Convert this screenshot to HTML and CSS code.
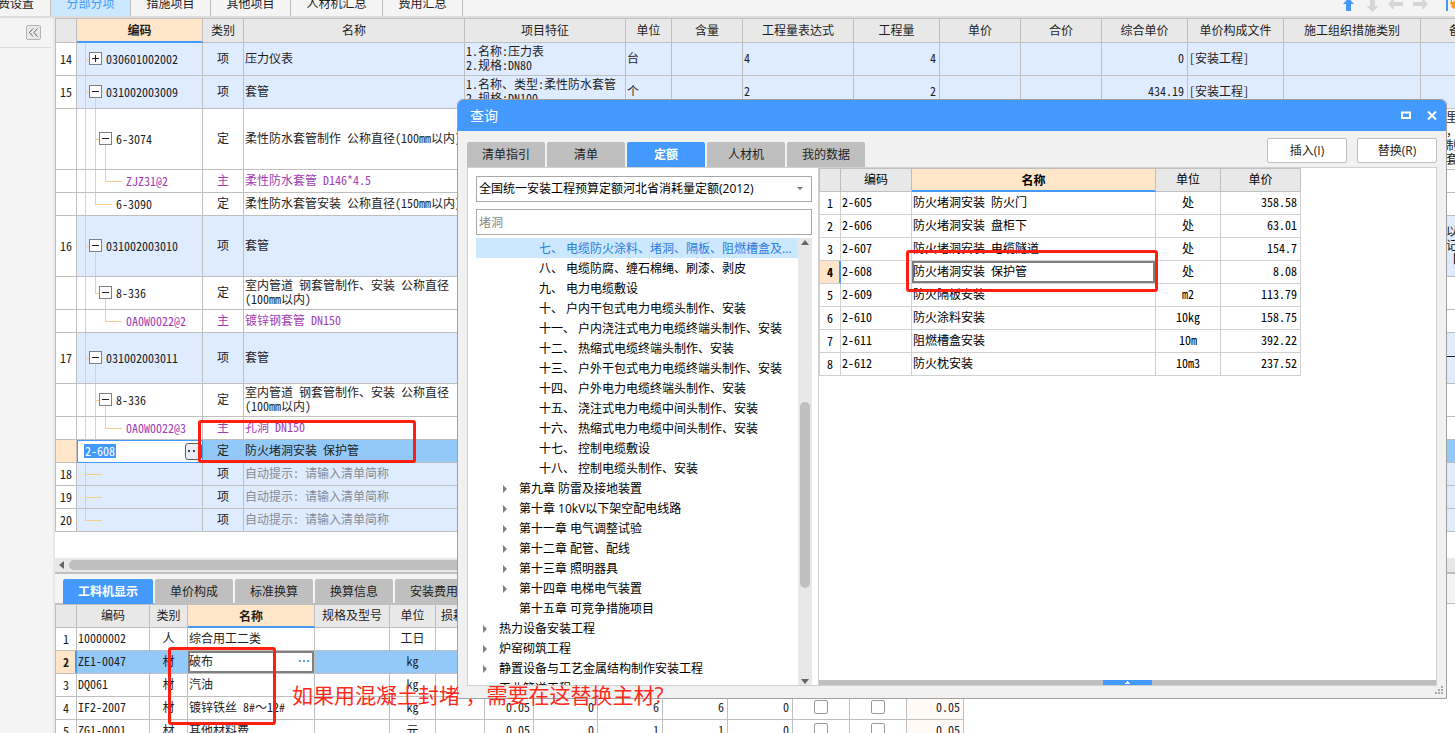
FILE: index.html
```html
<!DOCTYPE html>
<html lang="zh-CN">
<head>
<meta charset="utf-8">
<title>分部分项</title>
<link rel="stylesheet" href="styles.css">
</head>
<body>
<div class="app">
  <header class="topbar">
    <nav class="maintabs">
      <button class="first">费设置</button>
      <button class="w80 on">分部分项</button>
      <button class="w80">措施项目</button>
      <button class="w80">其他项目</button>
      <button class="w92">人材机汇总</button>
      <button class="w80">费用汇总</button>
    </nav>
    <div class="tools">
      <svg width="112" height="12" viewBox="0 0 112 12">
        <path d="M5.500 -2L11 4H8V11H3V4H0Z" fill="#4499ff"/>
        <path d="M27 0H32V6H35.500L29.500 12L23.500 6H27Z" fill="#d6d6d6"/>
        <path d="M45 4L51 -2V2H60V6H51V10Z" fill="#d6d6d6"/>
        <path d="M85 4L79 -2V2H70V6H79V10Z" fill="#d6d6d6"/>
        <path d="M103 0H105V11H103Z" fill="#4499ff"/>
        <path d="M108 0H109V2L112 1V9L110 8L108 7L109 5L107 4Z" fill="#ff9a1f"/>
      </svg>
    </div>
  </header>

  <div class="body">
    <aside class="side">
      <div class="sidehead">
        <button class="collapse" aria-label="收起"><svg width="9" height="9" viewBox="0 0 9 9"><path d="M4 0.500L0.500 4.500L4 8.500M8.500 0.500L5 4.500L8.500 8.500" fill="none" stroke="#666"/></svg></button>
      </div>
    </aside>

    <main class="main">
      <section class="upper">
        <div class="gridwrap">
        <table class="grid items">
          <colgroup><col class="c22"><col class="c126"><col class="c41"><col class="c221"><col class="c161"><col class="c46"><col class="c71"><col class="c111"><col class="c86"><col class="c81"><col class="c81"><col class="c86"><col class="c96"><col class="c137"><col class="c81"></colgroup>
          <thead><tr><th></th><th class="hot">编码</th><th>类别</th><th>名称</th><th>项目特征</th><th>单位</th><th>含量</th><th>工程量表达式</th><th>工程量</th><th>单价</th><th>合价</th><th>综合单价</th><th>单价构成文件</th><th>施工组织措施类别</th><th>备注</th></tr></thead>
          <tbody>
          <tr class="item h33"><td>14</td><td class="t-leaf"><div class="code in1"><button class="exp plus" aria-label="展开"></button>030601002002</div></td><td>项</td><td>压力仪表</td><td class="multi">1.名称:压力表<br>2.规格:DN80</td><td>台</td><td></td><td>4</td><td class="num">4</td><td></td><td></td><td class="num">0</td><td>[安装工程]</td><td></td><td></td></tr>
          <tr class="item h33"><td>15</td><td class="t-open"><div class="code in1"><button class="exp" aria-label="收起"></button>031002003009</div></td><td>项</td><td>套管</td><td class="multi">1.名称、类型:柔性防水套管<br>2.规格:DN100</td><td>个</td><td></td><td>2</td><td class="num">2</td><td></td><td></td><td class="num">434.19</td><td>[安装工程]</td><td></td><td></td></tr>
          <tr class="h61"><td></td><td class="t-sub-mid"><div class="code in2"><button class="exp" aria-label="收起"></button>6-3074</div></td><td>定</td><td>柔性防水套管制作 公称直径(100mm以内)</td><td></td><td></td><td></td><td></td><td></td><td></td><td></td><td></td><td></td><td></td><td class="multi note">里<br>，<br>制<br>套</td></tr>
          <tr class="mat h23"><td></td><td class="t-mat-mid"><div class="code in4">ZJZ31@2</div></td><td>主</td><td>柔性防水套管 D146*4.5</td><td></td><td></td><td></td><td></td><td></td><td></td><td></td><td></td><td></td><td></td><td></td></tr>
          <tr class="h23"><td></td><td class="t-sub-leaf"><div class="code in3">6-3090</div></td><td>定</td><td>柔性防水套管安装 公称直径(150mm以内)</td><td></td><td></td><td></td><td></td><td></td><td></td><td></td><td></td><td></td><td></td><td></td></tr>
          <tr class="item h61"><td>16</td><td class="t-open"><div class="code in1"><button class="exp" aria-label="收起"></button>031002003010</div></td><td>项</td><td>套管</td><td></td><td></td><td></td><td></td><td></td><td></td><td></td><td></td><td></td><td></td><td class="multi note">以<br>记<br>【</td></tr>
          <tr class="h33"><td></td><td class="t-sub-end"><div class="code in2"><button class="exp" aria-label="收起"></button>8-336</div></td><td>定</td><td class="multi">室内管道 钢套管制作、安装 公称直径<br>(100mm以内)</td><td></td><td></td><td></td><td></td><td></td><td></td><td></td><td></td><td></td><td></td><td></td></tr>
          <tr class="mat h23"><td></td><td class="t-mat-end"><div class="code in4">0A0W0022@2</div></td><td>主</td><td>镀锌钢套管 DN150</td><td></td><td></td><td></td><td></td><td></td><td></td><td></td><td></td><td></td><td></td><td></td></tr>
          <tr class="item h51"><td>17</td><td class="t-open"><div class="code in1"><button class="exp" aria-label="收起"></button>031002003011</div></td><td>项</td><td>套管</td><td></td><td></td><td></td><td></td><td></td><td></td><td></td><td></td><td></td><td></td><td class="note">一套</td></tr>
          <tr class="h33"><td></td><td class="t-sub-mid"><div class="code in2"><button class="exp" aria-label="收起"></button>8-336</div></td><td>定</td><td class="multi">室内管道 钢套管制作、安装 公称直径<br>(100mm以内)</td><td></td><td></td><td></td><td></td><td></td><td></td><td></td><td></td><td></td><td></td><td></td></tr>
          <tr class="mat h23"><td></td><td class="t-mat-mid"><div class="code in4">0A0W0022@3</div></td><td>主</td><td>孔洞 DN150</td><td></td><td></td><td></td><td></td><td></td><td></td><td></td><td></td><td></td><td></td><td></td></tr>
          <tr class="cur h23"><td></td><td class="editing"><div class="edit"><input class="editbox" value="2-608" aria-label="编码"><button class="more" aria-label="选择"><svg width="12" height="2" viewBox="0 0 12 2"><path d="M0 0H2V2H0ZM5 0H7V2H5ZM10 0H12V2H10Z" fill="#444"/></svg></button></div></td><td>定</td><td>防火堵洞安装 保护管</td><td></td><td></td><td></td><td></td><td></td><td></td><td></td><td></td><td></td><td></td><td></td></tr>
          <tr class="item hint h23"><td>18</td><td class="t-new"></td><td>项</td><td>自动提示: 请输入清单简称</td><td></td><td></td><td></td><td></td><td></td><td></td><td></td><td></td><td></td><td></td><td></td></tr>
          <tr class="item hint h23"><td>19</td><td class="t-new"></td><td>项</td><td>自动提示: 请输入清单简称</td><td></td><td></td><td></td><td></td><td></td><td></td><td></td><td></td><td></td><td></td><td></td></tr>
          <tr class="item hint h23"><td>20</td><td class="t-new-end"></td><td>项</td><td>自动提示: 请输入清单简称</td><td></td><td></td><td></td><td></td><td></td><td></td><td></td><td></td><td></td><td></td><td></td></tr>
          </tbody>
        </table>
        </div>
        <div class="hscroll"><svg width="5" height="8" viewBox="0 0 5 8"><path d="M5 0V8L0 4Z" fill="#666"/></svg><span class="hthumb"></span></div>
      </section>

      <section class="lower">
        <nav class="tabs lowtabs">
          <button class="on">工料机显示</button><button>单价构成</button><button>标准换算</button><button>换算信息</button><button>安装费用</button>
        </nav>
        <table class="grid parts">
          <colgroup><col class="c22"><col class="c73"><col class="c38"><col class="c127"><col class="c75"><col class="c46"><col class="c49"><col class="c49"><col class="c64"><col class="c65"><col class="c65"><col class="c65"><col class="c57"><col class="c57"><col class="c57"></colgroup>
          <thead><tr><th></th><th>编码</th><th>类别</th><th class="hot">名称</th><th>规格及型号</th><th>单位</th><th class="cut">损耗率</th><th></th><th></th><th></th><th></th><th></th><th></th><th></th><th></th></tr></thead>
          <tbody>
          <tr class="h23"><td>1</td><td>10000002</td><td>人</td><td>综合用工二类</td><td></td><td class="mid">工日</td><td></td><td></td><td></td><td></td><td></td><td></td><td></td><td></td><td></td></tr>
          <tr class="cur h23"><td>2</td><td>ZE1-0047</td><td>材</td><td class="cell"><div class="cellrow"><span>破布</span><svg width="11" height="2" viewBox="0 0 11 2"><path d="M0 0H2V2H0ZM4 0H6V2H4ZM8 0H10V2H8Z" fill="#5aa0dc"/></svg></div></td><td></td><td class="mid">kg</td><td></td><td></td><td></td><td></td><td></td><td></td><td></td><td></td><td></td></tr>
          <tr class="h23"><td>3</td><td>DQ061</td><td>材</td><td>汽油</td><td></td><td class="mid">kg</td><td></td><td></td><td></td><td></td><td></td><td></td><td></td><td></td><td></td></tr>
          <tr class="h23"><td>4</td><td>IF2-2007</td><td>材</td><td>镀锌铁丝 8#～12#</td><td></td><td class="mid">kg</td><td></td><td class="num">0.05</td><td class="num">0</td><td class="num">6</td><td class="num">6</td><td class="num">0</td><td class="mid"><input type="checkbox" aria-label="是否暂估"></td><td class="mid"><input type="checkbox" aria-label="锁定数量"></td><td class="num warm">0.05</td></tr>
          <tr class="h23"><td>5</td><td>ZG1-0001</td><td>材</td><td>其他材料费</td><td></td><td class="mid">元</td><td></td><td class="num">0.05</td><td class="num">0</td><td class="num">1</td><td class="num">1</td><td class="num">0</td><td class="mid"><input type="checkbox" aria-label="是否暂估"></td><td class="mid"><input type="checkbox" aria-label="锁定数量"></td><td class="num warm">0.05</td></tr>
          </tbody>
        </table>
      </section>
    </main>
  </div>

  <div class="dialog" role="dialog" aria-label="查询">
    <div class="title">
      <span>查询</span>
      <div class="winbtns">
        <button aria-label="最大化"><svg width="10" height="8" viewBox="0 0 10 8"><path d="M1 1.500H9V7H1Z" fill="none" stroke="#fff" stroke-width="2"/></svg></button>
        <button aria-label="关闭"><svg width="10" height="9" viewBox="0 0 10 9"><path d="M1 0.500L9 8.500M9 0.500L1 8.500" stroke="#fff" stroke-width="2"/></svg></button>
      </div>
    </div>
    <div class="dhead">
      <nav class="tabs">
        <button>清单指引</button><button>清单</button><button class="on">定额</button><button>人材机</button><button>我的数据</button>
      </nav>
      <div class="actions"><button>插入(I)</button><button>替换(R)</button></div>
    </div>
    <div class="panel">
      <div class="left">
        <div class="combo"><select aria-label="定额库"><option>全国统一安装工程预算定额河北省消耗量定额(2012)</option></select><svg width="6" height="4" viewBox="0 0 6 4"><path d="M0 0H6L3 3Z" fill="#777"/></svg></div>
        <input class="search" type="text" placeholder="堵洞" aria-label="搜索">
        <div class="treebox">
          <ul class="tree">
            <li class="d3 sel">七、 电缆防火涂料、堵洞、隔板、阻燃槽盒及...</li>
            <li class="d3">八、 电缆防腐、缠石棉绳、刷漆、剥皮</li>
            <li class="d3">九、 电力电缆敷设</li>
            <li class="d3">十、 户内干包式电力电缆头制作、安装</li>
            <li class="d3">十一、 户内浇注式电力电缆终端头制作、安装</li>
            <li class="d3">十二、 热缩式电缆终端头制作、安装</li>
            <li class="d3">十三、 户外干包式电力电缆终端头制作、安装</li>
            <li class="d3">十四、 户外电力电缆终端头制作、安装</li>
            <li class="d3">十五、 浇注式电力电缆中间头制作、安装</li>
            <li class="d3">十六、 热缩式电力电缆中间头制作、安装</li>
            <li class="d3">十七、 控制电缆敷设</li>
            <li class="d3">十八、 控制电缆头制作、安装</li>
            <li class="d2"><i></i>第九章 防雷及接地装置</li>
            <li class="d2"><i></i>第十章 10kV以下架空配电线路</li>
            <li class="d2"><i></i>第十一章 电气调整试验</li>
            <li class="d2"><i></i>第十二章 配管、配线</li>
            <li class="d2"><i></i>第十三章 照明器具</li>
            <li class="d2"><i></i>第十四章 电梯电气装置</li>
            <li class="d2"><i class="none"></i>第十五章 可竞争措施项目</li>
            <li class="d1"><i></i>热力设备安装工程</li>
            <li class="d1"><i></i>炉窑砌筑工程</li>
            <li class="d1"><i></i>静置设备与工艺金属结构制作安装工程</li>
            <li class="d1"><i></i>工业管道工程</li>
          </ul>
          <div class="vscroll">
            <svg width="8" height="5" viewBox="0 0 8 5"><path d="M0 5H8L4 0Z" fill="#666"/></svg>
            <div class="track"><span></span></div>
            <svg width="8" height="5" viewBox="0 0 8 5"><path d="M0 0H8L4 5Z" fill="#666"/></svg>
          </div>
        </div>
      </div>
      <div class="right">
        <table class="grid quota">
          <colgroup><col class="c22"><col class="c71"><col class="c244"><col class="c65"><col class="c80"></colgroup>
          <thead><tr><th></th><th>编码</th><th class="hot">名称</th><th>单位</th><th>单价</th></tr></thead>
          <tbody>
          <tr class="h23"><td>1</td><td>2-605</td><td>防火堵洞安装 防火门</td><td class="mid">处</td><td class="num">358.58</td></tr>
          <tr class="h23"><td>2</td><td>2-606</td><td>防火堵洞安装 盘柜下</td><td class="mid">处</td><td class="num">63.01</td></tr>
          <tr class="h23"><td>3</td><td>2-607</td><td>防火堵洞安装 电缆隧道</td><td class="mid">处</td><td class="num">154.7</td></tr>
          <tr class="h23 pick"><td>4</td><td>2-608</td><td class="cell">防火堵洞安装 保护管</td><td class="mid">处</td><td class="num">8.08</td></tr>
          <tr class="h23"><td>5</td><td>2-609</td><td>防火隔板安装</td><td class="mid">m2</td><td class="num">113.79</td></tr>
          <tr class="h23"><td>6</td><td>2-610</td><td>防火涂料安装</td><td class="mid">10kg</td><td class="num">158.75</td></tr>
          <tr class="h23"><td>7</td><td>2-611</td><td>阻燃槽盒安装</td><td class="mid">10m</td><td class="num">392.22</td></tr>
          <tr class="h23"><td>8</td><td>2-612</td><td>防火枕安装</td><td class="mid">10m3</td><td class="num">237.52</td></tr>
          </tbody>
        </table>
        <div class="foot"><button aria-label="展开"><svg width="5" height="3" viewBox="0 0 5 3"><path d="M0 3V2H1V1H2V0H3V1H4V2H5V3Z" fill="#fff"/></svg></button></div>
      </div>
    </div>
    <svg class="grip" width="8" height="8" viewBox="0 0 8 8"><path d="M6 0H8V2H6ZM3 3H5V5H3ZM6 3H8V5H6ZM0 6H2V8H0ZM3 6H5V8H3ZM6 6H8V8H6Z" fill="#a8a8a8"/></svg>
  </div>

  <div class="mark m1"></div>
  <div class="mark m2"></div>
  <div class="mark m3"></div>
  <p class="remark">如果用混凝土封堵 ，需要在这替换主材?</p>
</div>
</body>
</html>
```
FILE: styles.css
```css
:root {
  --ui: "Open Sans", "Noto Sans CJK SC", sans-serif;
  --cell: "Noto Sans Mono CJK SC", "Noto Sans CJK SC", sans-serif;
  --blue: #4499ff;
  --peach: #ffe6c8;
  --line: #bfbfbf;
  --o: linear-gradient(#ffc987, #ffc987) no-repeat;
}
* { box-sizing: border-box; }
body { margin: 0; font: 12px/16px var(--ui); color: #1e1e1e; }
button { font: inherit; color: inherit; padding: 0; border: 0; background: none; white-space: nowrap; }
.app { position: relative; display: flex; flex-direction: column; height: 100vh; overflow: hidden; background: #f4f4f4; }

.topbar { display: flex; justify-content: space-between; height: 18px; flex: none; border-bottom: 2px solid #dcdcdc; overflow: hidden; }
.maintabs { display: flex; align-items: flex-end; }
.maintabs button { height: 24px; border-right: 1px solid var(--line); }
.maintabs .on { background: #cce8ff; color: var(--blue); }
.maintabs .first { width: 51px; text-align: left; text-indent: -2px; }
.w80 { width: 80px; }
.w92 { width: 92px; }

.body { flex: 1; display: flex; min-height: 0; }
.side { flex: none; width: 55px; border-right: 2px solid #e8e8e8; }
.sidehead { width: 51px; height: 30px; border-bottom: 1px solid #dcdcdc; display: flex; justify-content: flex-end; padding: 7px 10px 0 0; }
.collapse { width: 15px; height: 15px; border: 1px solid #b4b4b4; border-radius: 2px; background: #e8e8e8; display: flex; align-items: center; justify-content: center; }
.main { flex: 1; min-width: 0; display: flex; flex-direction: column; }
.upper { flex: 1; min-height: 0; display: flex; flex-direction: column; background: #fff; }
.gridwrap { flex: 1; min-height: 0; overflow: hidden; }
.hscroll { flex: none; height: 14px; background: #e8e8e8; display: flex; align-items: center; gap: 5px; padding: 0 16px 0 4px; }
.hthumb { flex: 1; height: 10px; border-radius: 5px; background: #bfbfbf; }
.lower { flex: none; height: 161px; background: #fff; overflow: hidden; border-top: 2px solid var(--line); }

.grid { table-layout: fixed; width: 0; border-collapse: separate; border-spacing: 0; font: 12px/14px var(--cell); }
.grid th, .grid td { border: solid var(--line); border-width: 0 1px 1px 0; padding: 0 1px 2px; overflow: hidden; white-space: nowrap; text-align: left; }
.grid th { height: 25px; border-top-width: 1px; background: #e8e8e8; font-weight: 400; text-align: center; }
.grid th:first-child, .grid td:first-child { border-left-width: 1px; }
.grid td:first-child { text-align: center; padding: 0; background: #fff; }
.grid th.hot { background: var(--peach); font-weight: 700; border-bottom: 2px solid var(--blue); padding-bottom: 0; }
.grid th.cut { text-align: left; padding-left: 5px; }
.grid .num { text-align: right; padding-right: 3px; }
.grid .mid { text-align: center; }
.items td:nth-child(3), .parts td:nth-child(3) { text-align: center; }
.items .item td { background-color: #dfebff; }
.items .item td:first-child { background: #fff; }
.items .mat td { color: #a33db5; }
.items .hint td:nth-child(4) { color: #868b94; }
.items .note { padding-left: 25px; }
.grid .cur td { background: #93c9f8; }
.grid .cur td:first-child, .grid .pick td:first-child { background: var(--peach); font-weight: 700; }
.parts .cur td:first-child, .quota .pick td:first-child { box-shadow: inset -1px 0 var(--blue); border-right-color: var(--blue); }
.grid .cell, .parts .cur .cell { background: #fff; box-shadow: inset 0 0 0 2px #808080; }
.parts .warm { background: #fffaf5; }
.h23 td { height: 23px; }
.h33 td { height: 33px; }
.h51 td { height: 51px; }
.h61 td { height: 61px; }
.c22 { width: 22px; } .c38 { width: 38px; } .c41 { width: 41px; } .c46 { width: 46px; } .c49 { width: 49px; }
.c57 { width: 57px; } .c64 { width: 64px; } .c65 { width: 65px; } .c71 { width: 71px; } .c73 { width: 73px; }
.c75 { width: 75px; } .c80 { width: 80px; } .c81 { width: 81px; } .c86 { width: 86px; } .c96 { width: 96px; }
.c111 { width: 111px; } .c126 { width: 126px; } .c127 { width: 127px; } .c137 { width: 137px; } .c161 { width: 161px; }
.c221 { width: 221px; } .c244 { width: 244px; }
.parts th, .quota th { height: 24px; }
.quota th { color: #000; }
.quota td { color: #000; border-color: #d0d0d0; }

/* Tree guide lines of the code column */
.grid .t-leaf, .grid .t-open, .grid .t-sub-mid, .grid .t-sub-end, .grid .t-sub-leaf, .grid .t-mat-mid, .grid .t-mat-end { padding: 0 0 1px; }
.t-leaf { background: var(--o) 8px 0 / 1px 100%, var(--o) 8px 50% / 4px 1px; }
.t-open { background: var(--o) 8px 0 / 1px 100%, var(--o) 8px 50% / 4px 1px, var(--o) 18px 100% / 1px 50%; }
.t-sub-mid { background: var(--o) 8px 0 / 1px 100%, var(--o) 18px 0 / 1px 100%, var(--o) 18px 50% / 4px 1px, var(--o) 28px 100% / 1px 50%; }
.t-sub-end { background: var(--o) 8px 0 / 1px 100%, var(--o) 18px 0 / 1px 50%, var(--o) 18px 50% / 4px 1px, var(--o) 28px 100% / 1px 50%; }
.t-sub-leaf { background: var(--o) 8px 0 / 1px 100%, var(--o) 18px 0 / 1px 50%, var(--o) 18px 50% / 17px 1px; }
.t-mat-mid { background: var(--o) 8px 0 / 1px 100%, var(--o) 18px 0 / 1px 100%, var(--o) 28px 0 / 1px 50%, var(--o) 28px 50% / 17px 1px; }
.t-mat-end { background: var(--o) 8px 0 / 1px 100%, var(--o) 28px 0 / 1px 50%, var(--o) 28px 50% / 17px 1px; }
.t-new { background: var(--o) 8px 0 / 1px 100%, var(--o) 8px 50% / 17px 1px; }
.t-new-end { background: var(--o) 8px 0 / 1px 50%, var(--o) 8px 50% / 17px 1px; }
.code { display: flex; align-items: center; gap: 4px; }
.in1 { padding-left: 12px; }
.in2 { padding-left: 22px; }
.in3 { padding-left: 39px; }
.in4 { padding-left: 49px; }
.exp { width: 13px; height: 13px; border: 1px solid #808080; background: linear-gradient(#222, #222) 50% 50% / 7px 1px no-repeat #fff; }
.exp.plus { background: linear-gradient(#222, #222) 50% 50% / 7px 1px no-repeat, linear-gradient(#222, #222) 50% 50% / 1px 7px no-repeat #fff; }
.items .cur .editing { background: #fff; padding: 0; box-shadow: inset 1px 1px var(--blue); border-color: var(--blue); }
.edit { display: flex; align-items: center; justify-content: space-between; padding-left: 7px; }
.editbox { width: 32px; height: 14px; padding: 0 1px; border: 0; background: var(--blue); color: #fff; font: inherit; }
.more { width: 17px; height: 17px; border: 1px solid #606060; border-radius: 3px; background: #e8edf8; display: flex; align-items: center; justify-content: center; }
.cellrow { display: flex; justify-content: space-between; align-items: center; padding-right: 3px; }
input[type="checkbox"] { appearance: none; display: block; width: 14px; height: 14px; margin: 0 auto; border: 1px solid #999; border-radius: 2px; background: #fff; }

.tabs { display: flex; gap: 2px; }
.tabs button { width: 78px; height: 25px; background: #bfbfbf; border-radius: 2px 2px 0 0; }
.tabs .on { background: var(--blue); color: #fff; font-weight: 700; }
.lowtabs { height: 30px; padding: 5px 0 0 8px; background: #f4f4f4; border-bottom: 1px solid var(--line); }
.lowtabs .on { width: 90px; }

.dialog { position: absolute; inset: 99px 8px 34px 457px; display: flex; flex-direction: column; background: #f1f1f1; border: 1px solid #a0a0a0; border-radius: 6px 6px 0 0; }
.title { flex: none; height: 31px; padding: 0 9px 0 12px; display: flex; align-items: center; justify-content: space-between; background: var(--blue); color: #fff; font-size: 14px; border-radius: 5px 5px 0 0; }
.winbtns { display: flex; gap: 16px; }
.winbtns button { display: flex; }
.dhead { flex: none; height: 36px; padding: 0 9px; display: flex; align-items: flex-end; justify-content: space-between; }
.actions { height: 29px; display: flex; gap: 10px; }
.actions button { width: 80px; height: 25px; border: 1px solid var(--line); border-radius: 2px; background: #fff; }
.panel { flex: 1; min-height: 0; margin: 0 9px 12px; display: flex; border: 1px solid #d0d0d0; background: #fff; }
.left { flex: none; width: 351px; padding: 8px 6px 0 8px; display: flex; flex-direction: column; color: #000; border-right: 1px solid #d0d0d0; }
.combo { display: grid; grid-template-columns: 1fr 14px; align-items: center; border: 1px solid #a8a8a8; height: 26px; margin-bottom: 7px; }
.combo select { grid-area: 1 / 1 / 2 / 3; appearance: none; height: 24px; border: 0; padding: 0 2px; background: none; font: inherit; color: #000; }
.combo svg { grid-area: 1 / 2; }
.search { flex: none; height: 26px; padding: 0 2px; border: 1px solid #a8a8a8; font: inherit; margin-bottom: 3px; }
.search::placeholder { color: #8a8a8a; opacity: 1; }
.treebox { flex: 1; min-height: 0; display: flex; overflow: hidden; }
.tree { flex: 1; min-width: 0; margin: 0; padding: 0; list-style: none; overflow: hidden; }
.tree li { display: flex; align-items: center; height: 20px; padding-top: 2px; white-space: nowrap; }
.tree .sel { background: #cce8ff; color: #2b7de0; }
.d3 { padding-left: 63px; }
.d2 { padding-left: 27px; }
.d1 { padding-left: 7px; }
.tree i { width: 4px; height: 8px; margin-right: 12px; background: #808080; clip-path: polygon(0 0, 100% 50%, 0 100%); }
.tree i.none { background: none; }
.vscroll { flex: none; width: 14px; padding: 2px 0 1px; background: #e8e8e8; display: flex; flex-direction: column; align-items: center; }
.track { flex: 1; width: 10px; display: flex; flex-direction: column; padding: 157px 0 91px; }
.track span { flex: 1; border-radius: 5px; background: #bfbfbf; }
.right { flex: 1; min-width: 0; display: flex; flex-direction: column; justify-content: space-between; }
.foot { height: 5px; background: #bfbfbf; display: flex; justify-content: center; }
.foot button { width: 49px; background: var(--blue); display: flex; justify-content: center; align-items: center; }
.grip { position: absolute; right: 3px; bottom: 4px; }

/* Annotations drawn over the screen */
.mark { position: absolute; border: 3px solid #ff1e0f; border-radius: 3px; }
.m1 { left: 198px; top: 420px; width: 218px; height: 43px; }
.m2 { left: 906px; top: 250px; width: 252px; height: 42px; }
.m3 { left: 168px; top: 647px; width: 108px; height: 78px; }
.remark { position: absolute; left: 292px; top: 679px; margin: 0; font-size: 21px; line-height: 32px; color: #ff2a1a; white-space: nowrap; }
```
